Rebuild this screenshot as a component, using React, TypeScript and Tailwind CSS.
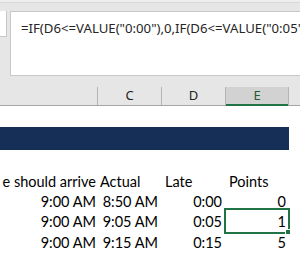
import React from "react";

const cellFont = { fontFamily: "Lato, 'Liberation Sans', sans-serif" };

function Row({
  b,
  c,
  d,
  e,
  h,
  header,
  selected,
}: {
  b: string;
  c: string;
  d: string;
  e: string;
  h: string;
  header?: boolean;
  selected?: boolean;
}) {
  const align = header ? "justify-start pl-[3px]" : "justify-end pr-[3px]";
  return (
    <div className={`flex ${h} items-end pb-[3px] text-[14.5px] leading-none text-black`} style={cellFont}>
      <div className="w-[97px] shrink-0 flex justify-end pr-[1px] whitespace-nowrap">{b}</div>
      <div className={`w-[64px] shrink-0 flex ${align} whitespace-nowrap`}>{c}</div>
      <div className={`w-[64px] shrink-0 flex ${header ? "justify-start pl-[4px]" : "justify-end pr-[3px]"} whitespace-nowrap`}>{d}</div>
      <div className={`relative w-[64px] shrink-0 h-full flex items-end ${header ? "justify-start pl-[4px]" : "justify-end pr-[3px]"} whitespace-nowrap`}>
        {e}
        {selected && (
          <>
            <div className="absolute left-[-1px] top-[-4px] right-[-1px] bottom-[-5px] border-2 border-[#217346]" />
            <div className="absolute right-[-2px] bottom-[-6px] w-[6px] h-[6px] bg-[#217346] border border-white" />
          </>
        )}
      </div>
    </div>
  );
}

export default function App() {
  return (
    <div className="w-[300px] h-[277px] overflow-hidden bg-white">
      <div className="bg-[#e6e6e6] h-[106px] flex flex-col">
        <div className="h-[3px] bg-[#eeeeee] border-b border-[#d8d8d8]" />
        <div className="flex mt-[8px]">
          <div className="w-[7px] h-[26px] bg-white border-r border-b border-[#c8c8c8]" />
          <div className="ml-[3px] flex-1 min-w-0 overflow-hidden h-[65px] bg-white border-l border-t border-b border-[#c8c8c8] pl-[10px] pt-[8px]">
            <div
              className="text-[13.2px] leading-[16px] text-[#262626] whitespace-nowrap"
              style={{ fontFamily: "'Noto Sans', 'Open Sans', sans-serif" }}
            >
              =IF(D6&lt;=VALUE("0:00"),0,IF(D6&lt;=VALUE("0:05"
            </div>
          </div>
        </div>
        <div className="mt-[11px] flex h-[19px] border-b border-[#a6a6a6] text-[13px]" style={{ fontFamily: "'Noto Sans', 'Open Sans', sans-serif" }}>
          <div className="w-[97px]" />
          <div className="w-[64px] border-l border-[#b4b4b4] flex items-center justify-center text-[#222]">C</div>
          <div className="w-[64px] border-l border-[#b4b4b4] flex items-center justify-center text-[#222]">D</div>
          <div className="w-[64px] border-l border-r border-[#b4b4b4] bg-[#d2d2d2] flex items-center justify-center text-[#1f5c38] relative">
            E
            <div className="absolute left-0 right-0 bottom-[-1px] h-[2px] bg-[#217346]" />
          </div>
          <div className="flex-1" />
        </div>
      </div>
      <div className="mt-[21px] w-[289px] h-[23px] bg-[#152f56]" />
      <div className="mt-[21px] flex flex-col">
        <Row h="h-[21px]" header b="e should arrive" c="Actual" d="Late" e="Points" />
        <Row h="h-[20px]" b="9:00 AM" c="8:50 AM" d="0:00" e="0" />
        <Row h="h-[20px]" b="9:00 AM" c="9:05 AM" d="0:05" e="1" selected />
        <Row h="h-[21px]" b="9:00 AM" c="9:15 AM" d="0:15" e="5" />
      </div>
    </div>
  );
}
